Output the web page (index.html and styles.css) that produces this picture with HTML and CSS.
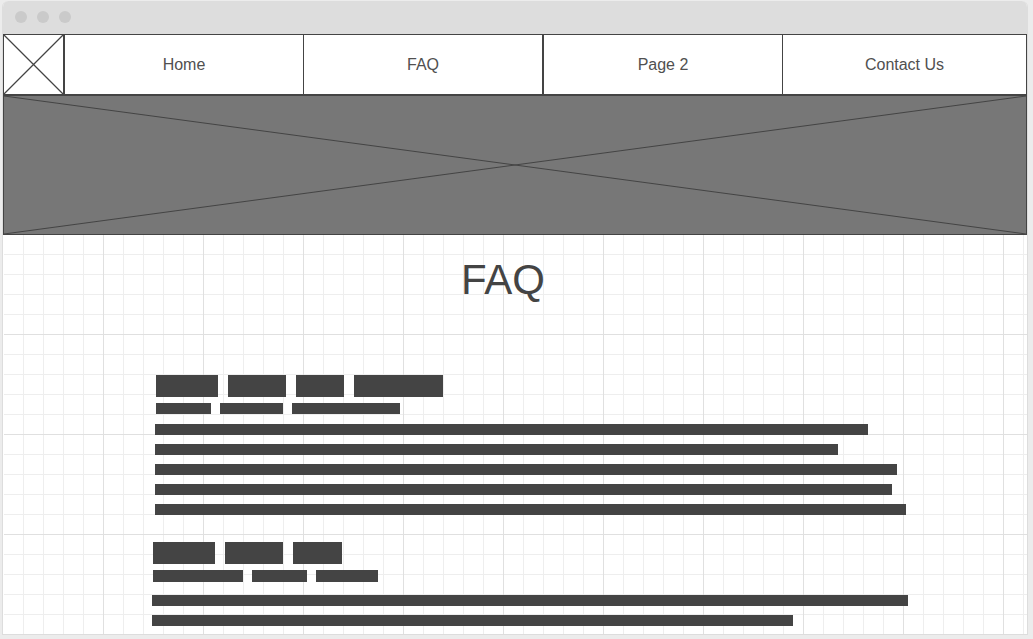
FILE: index.html
```html
<!DOCTYPE html>
<html lang="en">
<head>
<meta charset="utf-8">
<meta name="viewport" content="width=device-width, initial-scale=1">
<title>FAQ</title>
<link rel="stylesheet" href="styles.css">
</head>
<body>
<div class="window">
  <div class="titlebar">
    <span class="dot"></span><span class="dot"></span><span class="dot"></span>
  </div>
  <div class="canvas">
    <header>
      <div class="nav-row">
        <div class="logo">
          <svg class="cross cross-logo" viewBox="0 0 100 100" preserveAspectRatio="none" aria-hidden="true"><path d="M0 0L100 100M100 0L0 100"/></svg>
        </div>
        <nav class="nav">
          <a href="#home">Home</a>
          <a href="#faq">FAQ</a>
          <a href="#page2">Page 2</a>
          <a href="#contact">Contact Us</a>
        </nav>
      </div>
      <div class="banner">
        <svg class="cross" viewBox="0 0 100 100" preserveAspectRatio="none" aria-hidden="true"><path d="M0 0L100 100M100 0L0 100"/></svg>
      </div>
    </header>
    <main class="content">
      <h1 class="title" id="faq">FAQ</h1>
      <section class="entry">
        <div class="words words-large">
          <span style="width:62px"></span><span style="width:58px"></span><span style="width:48px"></span><span style="width:89px"></span>
        </div>
        <div class="words words-small">
          <span style="width:55px"></span><span style="width:63px"></span><span style="width:108px"></span>
        </div>
        <div class="lines">
          <span style="width:713px"></span>
          <span style="width:683px"></span>
          <span style="width:742px"></span>
          <span style="width:737px"></span>
          <span style="width:751px"></span>
        </div>
      </section>
      <section class="entry entry-second">
        <div class="words words-large">
          <span style="width:62px"></span><span style="width:58px"></span><span style="width:49px"></span>
        </div>
        <div class="words words-small">
          <span style="width:90px"></span><span style="width:55px"></span><span style="width:62px"></span>
        </div>
        <div class="lines">
          <span style="width:756px"></span>
          <span style="width:641px"></span>
        </div>
      </section>
    </main>
  </div>
</div>
</body>
</html>
```

FILE: styles.css
```css
* {
  box-sizing: border-box;
}

body {
  margin: 0;
  padding: 1px 5px 4px 2px;
  min-height: 100vh;
  display: flex;
  background: #ececec;
  color: #444;
  font-family: "Liberation Sans", Arial, sans-serif;
  font-size: 16px;
}

.window {
  flex: 1;
  display: flex;
  flex-direction: column;
  border: solid #ddd;
  border-width: 0 1px 1px;
  border-radius: 6px 6px 0 0;
  background: #fff;
  overflow: hidden;
}

.titlebar {
  display: flex;
  align-items: center;
  gap: 10px;
  height: 33px;
  padding: 0 12px 1px;
  background: #ddd;
}

.dot {
  width: 12px;
  height: 12px;
  border-radius: 50%;
  background: #cacaca;
}

/* Graph paper: 20px cells with a darker rule every 100px; no rule on the left edge */
.canvas {
  flex: 1;
  background-image:
    linear-gradient(#fff, #fff),
    linear-gradient(to right, #e0e0e0 1px, transparent 1px),
    linear-gradient(to bottom, #e0e0e0 1px, transparent 1px),
    linear-gradient(to right, #eee 1px, transparent 1px),
    linear-gradient(to bottom, #eee 1px, transparent 1px);
  background-size: 1px 100%, 100px 100px, 100px 100px, 20px 20px, 20px 20px;
  background-repeat: no-repeat, repeat, repeat, repeat, repeat;
}

.cross {
  display: block;
  width: 100%;
  height: 100%;
  fill: none;
  stroke: #444;
}

.cross path {
  vector-effect: non-scaling-stroke;
}

.cross-logo {
  stroke-width: 1.3;
}

.nav-row {
  display: flex;
  height: 62px;
  border: solid #444;
  border-width: 1px 0 2px;
  background: #fff;
}

.logo {
  flex: none;
  width: 62px;
  border: solid #444;
  border-width: 0 2px 0 1px;
}

.nav {
  flex: 1;
  display: grid;
  grid-template-columns: 239fr 240fr 239fr 244fr;
}

.nav a {
  display: flex;
  align-items: center;
  justify-content: center;
  border-right: 1px solid #444;
  color: #505050;
  text-decoration: none;
}

.nav a:nth-child(2) {
  border-right-width: 2px;
}

.banner {
  height: 139px;
  border: solid #444;
  border-width: 0 1px 1px;
  background: #777;
}

.content {
  padding: 21px 24px 8px 0;
}

.title {
  margin: 0 0 71px;
  font-size: 42px;
  line-height: 48px;
  font-weight: 400;
  text-align: center;
}

.entry {
  padding-left: 152px;
}

.entry-second {
  margin-top: 27px;
  padding-left: 149px;
}

.words {
  display: flex;
  padding-left: 1px;
}

.words span,
.lines span {
  background: #444;
}

.words-large {
  gap: 10px;
  height: 22px;
}

.words-small {
  gap: 9px;
  height: 11px;
  margin-top: 6px;
}

.lines {
  display: flex;
  flex-direction: column;
  gap: 9px;
  margin-top: 10px;
}

.lines span {
  height: 11px;
  max-width: 100%;
}

.entry-second .words-small {
  height: 12px;
}

.entry-second .lines {
  margin-top: 13px;
}
```
